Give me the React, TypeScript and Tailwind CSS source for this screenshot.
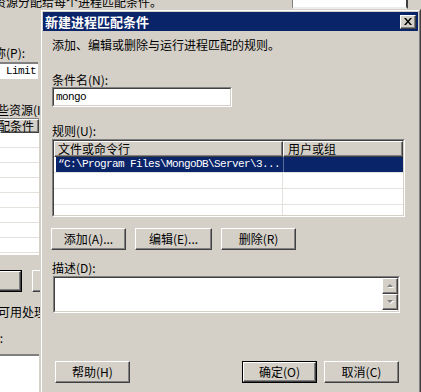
import React from "react";

const raised =
  "border border-t-white border-l-white border-r-[#404040] border-b-[#404040] shadow-[inset_-1px_-1px_0_#808080]";
const sunkenOuter = "border border-t-[#808080] border-l-[#808080] border-r-white border-b-white";
const sunkenInner = "border border-t-[#404040] border-l-[#404040] border-r-[#d4d0c8] border-b-[#d4d0c8]";

function Btn({
  children,
  className = "",
  isDefault = false,
}: {
  children?: React.ReactNode;
  className?: string;
  isDefault?: boolean;
}) {
  return (
    <div className={`h-[22px] w-[75px] shrink-0 ${isDefault ? "border border-black" : ""} ${className}`}>
      <div className={`flex h-full w-full items-center justify-center leading-none ${raised}`}>{children}</div>
    </div>
  );
}

function Arrow({ up }: { up?: boolean }) {
  return (
    <div className={`flex h-[16px] w-[16px] items-center justify-center bg-[#d4d0c8] ${raised}`}>
      <svg width="9" height="6" viewBox="0 0 9 6">
        {up ? (
          <>
            <path d="M2 5h6L5 2z" fill="#ffffff" />
            <path d="M1 4h6L4 1z" fill="#808080" />
          </>
        ) : (
          <>
            <path d="M2 2h6L5 5z" fill="#ffffff" />
            <path d="M1 1h6L4 4z" fill="#808080" />
          </>
        )}
      </svg>
    </div>
  );
}

export default function App() {
  const mono = "font-['Liberation_Mono',monospace] text-[11px] tracking-[-0.6px]";

  return (
    <div className="relative h-[392px] w-[421px] overflow-hidden bg-[#d4d0c8] font-['Noto_Sans_CJK_SC','Noto_Sans',sans-serif] text-[12px] text-black">
      {/* window behind */}
      <div className="flex h-[9px] items-end">
        <span className="-ml-[6px] whitespace-nowrap leading-[14px]">资源分配给每个进程匹配条件。</span>
        <div className="ml-auto mr-[13px] h-[9px] w-[116px] border-l border-l-[#808080] border-r-2 border-r-[#404040] border-b-2 border-b-[#ececec] bg-white" />
      </div>
      <div className="flex w-[40px] flex-col">
        <span className="-ml-[6px] mt-[37px] whitespace-nowrap leading-[14px]">称(P):</span>
        <div className="mt-[2px] flex h-[17px] w-[38px] items-center border-t-2 border-t-[#808080] bg-white pl-[6px]">
          <span className={mono}>Limit</span>
        </div>
        <span className="-ml-[3px] mt-[24px] whitespace-nowrap leading-[14px]">些资源(I)</span>
        <div className="mt-[1px] h-[137px] w-[39px] overflow-hidden border-t border-t-[#808080] bg-white">
          <div className={`h-[14px] whitespace-nowrap leading-[12px] ${raised} bg-[#d4d0c8]`}>
            <span className="-ml-[3px]">配条件</span>
          </div>
          {Array.from({ length: 8 }).map((_, i) => (
            <div key={i} className="h-[15px] border-b border-b-[#e4e2dc]" />
          ))}
        </div>
        <div className="mt-[15px] flex h-[22px] w-[60px]">
          <div className="-ml-[10px] h-[22px] w-[32px] shrink-0 border border-black">
            <div className={`h-full w-full ${raised}`} />
          </div>
          <div className={`ml-[10px] h-[22px] w-[20px] shrink-0 ${raised}`} />
        </div>
        <span className="-ml-[2px] mt-[13px] whitespace-nowrap leading-[14px]">可用处理器</span>
        <span className="-ml-[13px] mt-[12px] whitespace-nowrap leading-[14px]">N):</span>
        <div className="mt-[9px] h-[60px] w-[39px] border-t-2 border-t-[#808080] bg-white" />
      </div>

      {/* dialog */}
      <div className="absolute left-[40px] top-[9px] h-[395px] w-[381px] border border-t-[#d4d0c8] border-l-[#d4d0c8] border-r-[#404040] border-b-[#404040] bg-[#d4d0c8]">
        <div className="h-full w-full border border-t-white border-l-white border-r-[#808080] border-b-[#808080] p-px">
          <div className="flex h-[19px] items-center bg-[#0a246a] pl-[2px] pr-[2px]">
            <span className="text-[13px] font-bold leading-none text-white">新建进程匹配条件</span>
            <div className={`ml-auto flex h-[14px] w-[16px] items-center justify-center bg-[#d4d0c8] ${raised}`}>
              <svg width="8" height="7" viewBox="0 0 8 7">
                <path d="M0 0h2l2 2.5L6 0h2L5 3.5 8 7H6L4 4.5 2 7H0l3-3.5z" fill="#000" />
              </svg>
            </div>
          </div>

          <div className="flex flex-col pl-[9px]">
            <span className="mt-[7px] leading-[14px]">添加、编辑或删除与运行进程匹配的规则。</span>
            <span className="mt-[21px] leading-[14px]">条件名(N):</span>
            <div className={`h-[20px] w-[180px] ${sunkenOuter}`}>
              <div className={`flex h-full items-center bg-white pl-[2px] ${sunkenInner}`}>
                <span className={mono}>mongo</span>
              </div>
            </div>

            <span className="mt-[17px] leading-[14px]">规则(U):</span>
            <div className={`mt-[1px] h-[78px] w-[353px] ${sunkenOuter}`}>
              <div className={`h-full overflow-hidden bg-white ${sunkenInner}`}>
                <div className="flex h-[16px] bg-[#d4d0c8] leading-none">
                  <div className={`flex w-[229px] items-center pl-[3px] ${raised}`}>文件或命令行</div>
                  <div className={`flex w-[120px] items-center pl-[4px] ${raised}`}>用户或组</div>
                </div>
                <div className="flex h-[16px] border-b border-b-[#e4e2dc] pl-[2px]">
                  <div className="flex w-[227px] items-center bg-[#0a246a] pl-[2px] text-white">
                    <span className={`${mono} whitespace-nowrap`}>“C:\Program Files\MongoDB\Server\3...</span>
                  </div>
                  <div className="w-[120px] border-l border-l-[#5a6a98] bg-[#0a246a]" />
                </div>
                {[0, 1, 2].map((i) => (
                  <div key={i} className="flex h-[16px] border-b border-b-[#e4e2dc]">
                    <div className="w-[229px] border-r border-r-[#e4e2dc]" />
                  </div>
                ))}
              </div>
            </div>

            <div className="mt-[11px] flex gap-[9px]">
              <Btn className="-ml-px">添加(A)...</Btn>
              <Btn className="w-[77px]">编辑(E)...</Btn>
              <Btn>删除(R)</Btn>
            </div>

            <span className="mt-[11px] leading-[14px]">描述(D):</span>
            <div className={`mt-[1px] ml-[1px] h-[37px] w-[347px] ${sunkenOuter}`}>
              <div className={`flex h-full justify-end bg-white ${sunkenInner}`}>
                <div className="flex flex-col">
                  <Arrow up />
                  <Arrow />
                </div>
              </div>
            </div>

            <div className="mt-[48px] flex w-[353px]">
              <Btn className="ml-[3px]">帮助(H)</Btn>
              <Btn isDefault className="ml-auto">确定(O)</Btn>
              <Btn className="ml-[7px] mr-[6px]">取消(C)</Btn>
            </div>
          </div>
        </div>
      </div>
    </div>
  );
}
